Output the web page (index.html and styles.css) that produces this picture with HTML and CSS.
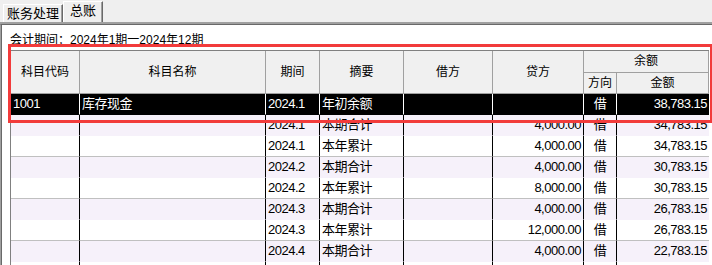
FILE: index.html
```html
<!doctype html>
<html lang="zh-CN">
<head>
    <meta charset="UTF-8">
    <title>总账</title>
    <link rel="stylesheet" href="styles.css">
</head>
<body>
    <div class="tabs">
        <div class="tab">账务处理</div>
        <div class="tab active">总账</div>
    </div>
    <div class="panel">
        <div class="period">会计期间：2024年1期一2024年12期</div>
        <div class="grid-wrap">
            <table class="ledger">
                <colgroup>
                    <col class="c-code">
                    <col class="c-name">
                    <col class="c-period">
                    <col class="c-memo">
                    <col class="c-debit">
                    <col class="c-credit">
                    <col class="c-dir">
                    <col class="c-amount">
                </colgroup>
                <thead>
                    <tr class="head-top">
                        <th rowspan="2">科目代码</th>
                        <th rowspan="2">科目名称</th>
                        <th rowspan="2">期间</th>
                        <th rowspan="2">摘要</th>
                        <th rowspan="2">借方</th>
                        <th rowspan="2">贷方</th>
                        <th colspan="2">余额</th>
                    </tr>
                    <tr class="head-sub">
                        <th>方向</th>
                        <th>金额</th>
                    </tr>
                </thead>
                <tbody>
                    <tr class="sel">
                        <td>1001</td><td>库存现金</td><td>2024.1</td><td>年初余额</td>
                        <td class="num"></td><td class="num"></td><td class="dir">借</td><td class="num">38,783.15</td>
                    </tr>
                    <tr>
                        <td></td><td></td><td>2024.1</td><td>本期合计</td>
                        <td class="num"></td><td class="num">4,000.00</td><td class="dir">借</td><td class="num">34,783.15</td>
                    </tr>
                    <tr>
                        <td></td><td></td><td>2024.1</td><td>本年累计</td>
                        <td class="num"></td><td class="num">4,000.00</td><td class="dir">借</td><td class="num">34,783.15</td>
                    </tr>
                    <tr>
                        <td></td><td></td><td>2024.2</td><td>本期合计</td>
                        <td class="num"></td><td class="num">4,000.00</td><td class="dir">借</td><td class="num">30,783.15</td>
                    </tr>
                    <tr>
                        <td></td><td></td><td>2024.2</td><td>本年累计</td>
                        <td class="num"></td><td class="num">8,000.00</td><td class="dir">借</td><td class="num">30,783.15</td>
                    </tr>
                    <tr>
                        <td></td><td></td><td>2024.3</td><td>本期合计</td>
                        <td class="num"></td><td class="num">4,000.00</td><td class="dir">借</td><td class="num">26,783.15</td>
                    </tr>
                    <tr>
                        <td></td><td></td><td>2024.3</td><td>本年累计</td>
                        <td class="num"></td><td class="num">12,000.00</td><td class="dir">借</td><td class="num">26,783.15</td>
                    </tr>
                    <tr>
                        <td></td><td></td><td>2024.4</td><td>本期合计</td>
                        <td class="num"></td><td class="num">4,000.00</td><td class="dir">借</td><td class="num">22,783.15</td>
                    </tr>
                    <tr class="blank">
                        <td></td><td></td><td></td><td></td>
                        <td class="num"></td><td class="num"></td><td class="dir"></td><td class="num"></td>
                    </tr>
                </tbody>
            </table>
            <div class="mark"></div>
        </div>
    </div>
</body>
</html>
```

FILE: styles.css
```css
html, body {
    height: 100%;
    overflow: hidden;
}
body {
    margin: 0;
    background: #fff;
    color: #000;
    font-family: "Liberation Sans", "Noto Sans CJK SC", sans-serif;
    font-size: 12px;
}
.tabs {
    display: flex;
    align-items: flex-end;
    height: 22px;
    padding-left: 3px;
    background: #efefef;
    border-bottom: 2px solid #a0a0a0;
}
.tab {
    height: 17px;
    padding: 0 3px;
    line-height: 17px;
    font-size: 13px;
    border: 1px solid #fff;
    border-right-color: #696969;
    border-bottom: none;
    box-shadow: inset -1px 0 #a0a0a0;
}
.tab.active {
    height: 20px;
    line-height: 18px;
    padding: 0 6px;
}
.panel {
    height: 100%;
    border-top: 1px solid #696969;
    border-left: 1px solid #a0a0a0;
    box-shadow: inset 1px 0 #696969;
}
.period {
    padding: 7px 0 0 9px;
    line-height: 16px;
    margin-bottom: 2px;
}
.grid-wrap {
    position: relative;
    margin-left: 9px;
}
.ledger {
    table-layout: fixed;
    width: 698px;
    border-collapse: separate;
    border-spacing: 0;
    border-left: 1px solid #808080;
    border-top: 1px solid #808080;
}
.c-code { width: 69px; }
.c-name { width: 186px; }
.c-period { width: 54px; }
.c-memo { width: 84px; }
.c-debit { width: 89px; }
.c-credit { width: 91px; }
.c-dir { width: 33px; }
.c-amount { width: 92px; }

.ledger th {
    padding: 0;
    font-weight: normal;
    font-size: 12px;
    text-align: center;
    background: #f0f0f0;
    border-right: 1px solid #a0a0a0;
    border-bottom: 1px solid #a0a0a0;
}
.head-top th {
    line-height: 21px;
}
.head-sub th {
    line-height: 20px;
}
.ledger td {
    padding: 0 0 0 2px;
    height: 20px;
    line-height: 20px;
    font-size: 13px;
    letter-spacing: -0.5px;
    white-space: nowrap;
    overflow: hidden;
    background: #fff;
    border-right: 1px solid #000;
    border-bottom: 1px solid #c0c0c0;
}
.ledger td.num {
    padding: 0 2px 0 0;
    text-align: right;
}
.ledger td.dir {
    padding: 0;
    text-align: center;
}
.ledger td:last-child {
    border-right: none;
}
.ledger tbody tr:nth-child(even) td {
    background: #f6f1fa;
    border-bottom-color: #f6f1fa;
}
.ledger tr.sel td {
    background: #000;
    color: #fff;
    border-right-color: #fff;
    border-bottom-color: #000;
}
.mark {
    position: absolute;
    left: -2px;
    top: -6px;
    width: 705px;
    height: 79px;
    box-sizing: border-box;
    border: 3px solid #f23b3b;
    pointer-events: none;
}
```
